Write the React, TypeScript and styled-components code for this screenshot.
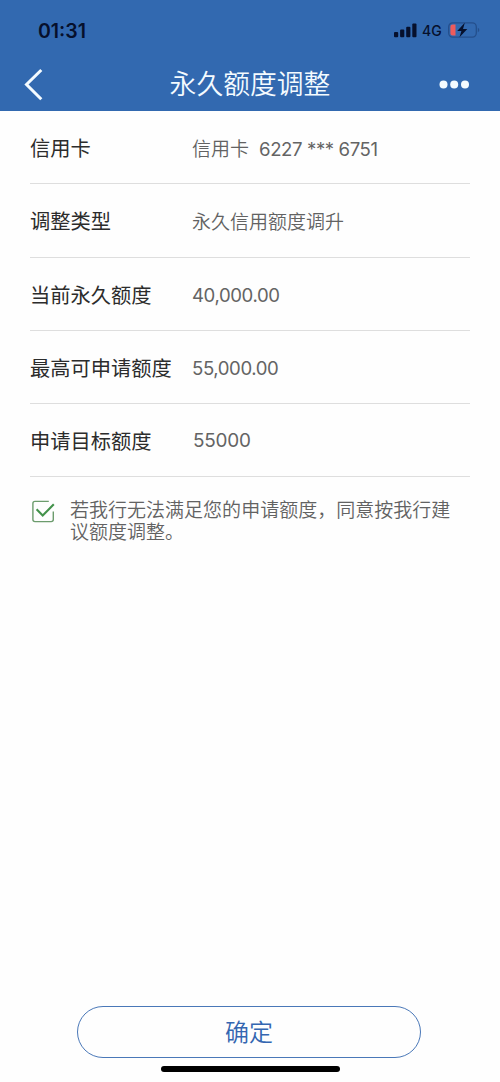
import React from 'react';
import styled, { createGlobalStyle } from 'styled-components';

const GlobalStyle = createGlobalStyle`
  * { box-sizing: border-box; }
  body { margin: 0; background: #fefefe; }
`;

const cjk = `'Noto Sans CJK SC', sans-serif`;

const Screen = styled.div`
  display: flex;
  flex-direction: column;
  width: 500px;
  height: 1082px;
  overflow: hidden;
  background: #fefefe;
  font-family: Inter, ${cjk};
`;

const Header = styled.header`
  height: 111px;
  flex: none;
  background: #3269b0;
`;

const StatusBar = styled.div`
  display: flex;
  align-items: center;
  justify-content: space-between;
  height: 60px;
  padding: 0 20px 0 38px;
  color: #06102c;
`;

const Clock = styled.span`
  padding-top: 1px;
  font-size: 19.5px;
  font-weight: 600;
  line-height: 24px;
`;

const StatusIcons = styled.div`
  display: flex;
  align-items: center;
`;

const Network = styled.span`
  width: 26px;
  margin-left: 5px;
  padding-top: 1px;
  font-size: 14px;
  font-weight: 500;
  line-height: 20px;
`;

const NavBar = styled.nav`
  display: grid;
  grid-template-columns: 80px 1fr 80px;
  align-items: center;
  height: 49px;
  color: #f4fbff;
`;

const IconButton = styled.button<{ $end?: boolean }>`
  display: flex;
  justify-content: ${(p) => (p.$end ? 'flex-end' : 'flex-start')};
  padding: ${(p) => (p.$end ? '0 30px 0 0' : '0 0 0 23px')};
  border: 0;
  background: none;
  color: inherit;
`;

const Title = styled.h1`
  margin: 0;
  padding-bottom: 4px;
  font: 350 26.8px/40px ${cjk};
  text-align: center;
  white-space: nowrap;
`;

const Form = styled.main`
  flex: 1;
  padding: 0 30px;
`;

const Row = styled.div`
  display: flex;
  align-items: center;
  height: 73.3px;
  padding-top: 2px;
  border-bottom: 1px solid #dedede;
`;

const Label = styled.span`
  width: 162px;
  flex: none;
  color: #2c2c2c;
  font: 400 20.25px/30px ${cjk};
  white-space: nowrap;
`;

const Value = styled.span`
  display: flex;
  align-items: baseline;
  gap: 10px;
  color: #626262;
  font: 350 19px/28px ${cjk};
  white-space: nowrap;
`;

const Digits = styled.span<{ $input?: boolean }>`
  margin-left: ${(p) => (p.$input ? 1 : 0)}px;
  color: #646464;
  font: 380 ${(p) => (p.$input ? 18.9 : 18.6)}px/28px Inter, ${cjk};
  letter-spacing: ${(p) => (p.$input ? -0.2 : -0.4)}px;
`;

const Agreement = styled.label`
  display: flex;
  padding-top: 22px;
`;

const AgreementText = styled.span`
  width: 382px;
  margin: -1px 0 0 14px;
  color: #626262;
  font: 350 19.03px/22px ${cjk};
`;

const Footer = styled.footer`
  display: flex;
  flex-direction: column;
  align-items: center;
  gap: 8px;
  height: 76.5px;
`;

const ConfirmButton = styled.button`
  width: 344px;
  height: 52px;
  margin-right: 2px;
  border: 1.5px solid #4a78b8;
  border-radius: 26px;
  background: transparent;
  color: #3466b1;
  font: 350 24px/36px ${cjk};
  padding: 0 0 2px;
`;

const HomeIndicator = styled.div`
  width: 179px;
  height: 6px;
  border-radius: 3px;
  background: #000;
`;

const SignalIcon = () => (
  <svg width="23" height="15" viewBox="0 0 23 15" fill="#06102c">
    <rect x="0" y="9" width="4.2" height="5.2" rx="1" />
    <rect x="6.1" y="6.6" width="4.2" height="7.6" rx="1" />
    <rect x="12.2" y="3.8" width="4.2" height="10.4" rx="1" />
    <rect x="18.3" y="0.6" width="4.2" height="13.6" rx="1" />
  </svg>
);

const BatteryIcon = () => (
  <svg width="32" height="16" viewBox="0 0 32 16">
    <rect x="0.7" y="0.9" width="27.6" height="14.2" rx="4" fill="none" stroke="#244f8c" strokeWidth="1.3" />
    <path d="M4.6 2.6H7.5V13.4H4.6Q2.4 13.4 2.4 11.2V4.8Q2.4 2.6 4.6 2.6Z" fill="#ed5b5c" />
    <path d="M29.8 5.7Q31.4 6.4 31.4 8T29.8 10.3Z" fill="#244f8c" />
    <path d="M16.8 0.8L9.2 8.9H13.4L11.5 15.3L19.3 7H15Z" fill="#06102c" />
  </svg>
);

const BackIcon = () => (
  <svg width="22" height="34" viewBox="0 0 22 34" fill="none" stroke="currentColor" strokeWidth="3">
    <path d="M18.3 2L3.5 16.5L18.3 31.3" />
  </svg>
);

const MoreIcon = () => (
  <svg width="31" height="10" viewBox="0 0 31 10" fill="currentColor">
    <circle cx="4.5" cy="4.6" r="4" />
    <circle cx="15.2" cy="4.6" r="4" />
    <circle cx="26" cy="4.6" r="4" />
  </svg>
);

const CheckIcon = () => (
  <svg width="26" height="26" viewBox="0 0 26 26" fill="none">
    <path d="M18.8 2.4H5Q2.9 2.4 2.9 4.5V20.5Q2.9 22.6 5 22.6H21.2Q23.3 22.6 23.3 20.5V12.5" stroke="#6c9c6d" strokeWidth="1.4" />
    <path d="M6.6 10.3L12.7 16.5L23.8 5.3" stroke="#43924b" strokeWidth="2.1" />
  </svg>
);

type Field = { label: string; text?: string; digits?: string; input?: boolean };

const fields: Field[] = [
  { label: '信用卡', text: '信用卡', digits: '6227 *** 6751' },
  { label: '调整类型', text: '永久信用额度调升' },
  { label: '当前永久额度', digits: '40,000.00' },
  { label: '最高可申请额度', digits: '55,000.00' },
  { label: '申请目标额度', digits: '55000', input: true },
];

export default function App() {
  return (
    <Screen>
      <GlobalStyle />
      <Header>
        <StatusBar>
          <Clock>01:31</Clock>
          <StatusIcons>
            <SignalIcon />
            <Network>4G</Network>
            <BatteryIcon />
          </StatusIcons>
        </StatusBar>
        <NavBar>
          <IconButton aria-label="返回"><BackIcon /></IconButton>
          <Title>永久额度调整</Title>
          <IconButton $end aria-label="更多"><MoreIcon /></IconButton>
        </NavBar>
      </Header>
      <Form>
        {fields.map(({ label, text, digits, input }) => (
          <Row key={label}>
            <Label>{label}</Label>
            <Value>
              {text && <span>{text}</span>}
              {digits && <Digits $input={input}>{digits}</Digits>}
            </Value>
          </Row>
        ))}
        <Agreement>
          <CheckIcon />
          <AgreementText>若我行无法满足您的申请额度，同意按我行建议额度调整。</AgreementText>
        </Agreement>
      </Form>
      <Footer>
        <ConfirmButton>确定</ConfirmButton>
        <HomeIndicator />
      </Footer>
    </Screen>
  );
}
